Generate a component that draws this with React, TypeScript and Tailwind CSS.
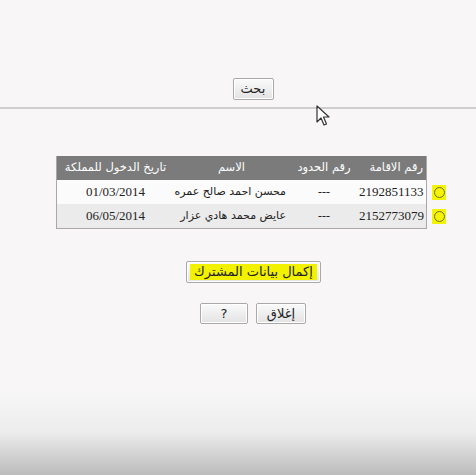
import React from 'react';

const rows = [
  { iqama: '2192851133', border: '---', name: 'محسن احمد صالح عمره', date: '01/03/2014', bg: 'bg-[#fbfbfb]' },
  { iqama: '2152773079', border: '---', name: 'عايض محمد هادي عزار', date: '06/05/2014', bg: 'bg-[#ebebeb]' },
];

function Btn({ children, className = '' }: { children: React.ReactNode; className?: string }) {
  return (
    <button
      className={`flex items-center justify-center rounded-[2px] border border-[#a9a9a9] bg-gradient-to-b from-[#fafafa] to-[#e3e3e3] text-[13px] text-[#222] shadow-[inset_0_0_0_1px_#fff] ${className}`}
    >
      {children}
    </button>
  );
}

export default function App() {
  return (
    <div
      dir="ltr"
      className="relative flex h-[475px] w-[476px] flex-col overflow-hidden bg-[#f8f6f6] font-['DejaVu_Sans',sans-serif]"
    >
      <div className="flex h-[78px] shrink-0" />
      <div className="flex justify-center pl-[30px]">
        <Btn className="h-[22px] w-[41px]">بحث</Btn>
      </div>
      <div className="mt-[7px] h-[2px] w-full bg-[#cfcdcd]" />

      {/* results table */}
      <div className="ml-[56px] mt-[47px] flex items-start">
        <div className="w-[371px] shrink-0 border border-t-0 border-[#a8a8a8]" dir="rtl">
          <div className="grid h-[24px] grid-cols-[67px_70px_115px_1fr] items-center whitespace-nowrap bg-[#7b7b7b] text-[11.5px] text-white">
            <div className="pr-[3px] text-right">رقم الاقامة</div>
            <div className="text-center">رقم الحدود</div>
            <div className="text-center">الاسم</div>
            <div className="text-center">تاريخ الدخول للمملكة</div>
          </div>
          {rows.map((r) => (
            <div
              key={r.iqama}
              className={`grid h-[24px] grid-cols-[67px_70px_115px_1fr] items-center whitespace-nowrap text-[12px] text-[#222] ${r.bg}`}
            >
              <div className="pr-[3px] text-right font-['Liberation_Serif',serif] text-[13px]" dir="ltr">
                {r.iqama}
              </div>
              <div className="text-center font-['Liberation_Serif',serif]">{r.border}</div>
              <div className="pr-[3px] text-right text-[11px]">{r.name}</div>
              <div className="text-center font-['Liberation_Serif',serif] text-[13px]" dir="ltr">
                {r.date}
              </div>
            </div>
          ))}
        </div>
        <div className="ml-[5px] flex flex-col gap-[9px] pt-[29px]">
          {rows.map((r) => (
            <div key={r.iqama} className="flex h-[15px] w-[14px] items-center justify-center bg-[#f4f400]">
              <div className="h-[11px] w-[11px] rounded-full border border-[#6b6b3a]" />
            </div>
          ))}
        </div>
      </div>

      <div className="mt-[32px] flex justify-center pl-[31px]">
        <Btn className="h-[22px] w-[135px]">
          <span className="bg-[#f2f200] px-[4px] leading-[16px]">إكمال بيانات المشترك</span>
        </Btn>
      </div>

      <div className="mt-[20px] flex justify-center gap-[8px] pl-[30px]">
        <Btn className="h-[21px] w-[48px]">?</Btn>
        <Btn className="h-[21px] w-[50px]">إغلاق</Btn>
      </div>

      <div className="mt-[66px] flex-1 bg-gradient-to-b from-[#f8f7f7] via-[#ececec] to-[#bcbcbc]" />

      {/* mouse cursor */}
      <svg className="absolute left-[316px] top-[105px]" width="16" height="22" viewBox="0 0 16 22">
        <path d="M1 1 L1 17 L5 13 L8 20 L10.5 19 L7.5 12 L13 12 Z" fill="#fff" stroke="#333" strokeWidth="1.2" strokeLinejoin="round" />
      </svg>
    </div>
  );
}
